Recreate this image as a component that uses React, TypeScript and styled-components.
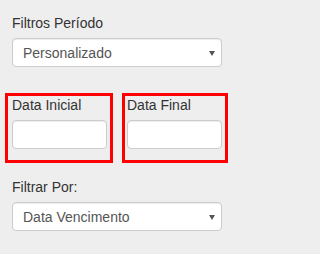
import React from 'react'
import styled, { createGlobalStyle } from 'styled-components'

// page defaults
const GlobalStyle = createGlobalStyle`
  * { box-sizing: border-box; }
  body {
    margin: 0;
    background: #eeeeee;
    font-family: "Liberation Sans", Arial, sans-serif;
  }
`

const Page = styled.div`
  padding: 13px 12px 0;
  width: 234px;
`

const Label = styled.label`
  display: block;
  font-size: 14px;
  line-height: 20px;
  color: #333;
  margin-bottom: 5px;
`

// wrapper so the arrow can sit over the select
const SelectWrap = styled.div`
  position: relative;

  &::after {
    content: '';
    position: absolute;
    right: 7px;
    top: 13px;
    border-left: 3px solid transparent;
    border-right: 3px solid transparent;
    border-top: 5px solid #555;
    pointer-events: none;
  }
`

const Select = styled.select`
  display: block;
  width: 100%;
  height: 29px;
  padding: 0 24px 0 10px;
  font-family: "Liberation Sans", Arial, sans-serif;
  font-size: 14px;
  color: #555;
  background: #fff;
  border: 1px solid #ccc;
  border-radius: 4px;
  box-shadow: inset 0 1px 1px rgba(0, 0, 0, 0.075);
  appearance: none;
  -webkit-appearance: none;
  outline: none;
`

const DateRow = styled.div`
  display: flex;
  gap: 9px;
  margin: 26px -6px 14px -7px;
`

const DateBox = styled.div<{ $width: number; $padLeft: number }>`
  width: ${p => p.$width}px;
  border: 3px solid #ff0000;
  padding: 0 3px 11px ${p => p.$padLeft}px;
`

const DateLabel = styled(Label)`
  line-height: 19px;
`

const DateInput = styled.input`
  display: block;
  width: 100%;
  height: 29px;
  padding: 0 10px;
  font-family: "Liberation Sans", Arial, sans-serif;
  font-size: 14px;
  color: #555;
  background: #fff;
  border: 1px solid #ccc;
  border-radius: 4px;
  box-shadow: inset 0 1px 1px rgba(0, 0, 0, 0.075);
  outline: none;
`

const App = () => {
  return (
    <>
      <GlobalStyle />
      <Page>
        <Label>Filtros Período</Label>
        <SelectWrap>
          <Select defaultValue="personalizado">
            <option value="personalizado">Personalizado</option>
          </Select>
        </SelectWrap>

        <DateRow>
          <DateBox $width={108} $padLeft={4}>
            <DateLabel>Data Inicial</DateLabel>
            <DateInput type="text" />
          </DateBox>
          <DateBox $width={106} $padLeft={2}>
            <DateLabel>Data Final</DateLabel>
            <DateInput type="text" />
          </DateBox>
        </DateRow>

        <Label>Filtrar Por:</Label>
        <SelectWrap>
          <Select defaultValue="vencimento">
            <option value="vencimento">Data Vencimento</option>
          </Select>
        </SelectWrap>
      </Page>
    </>
  )
}

export default App
